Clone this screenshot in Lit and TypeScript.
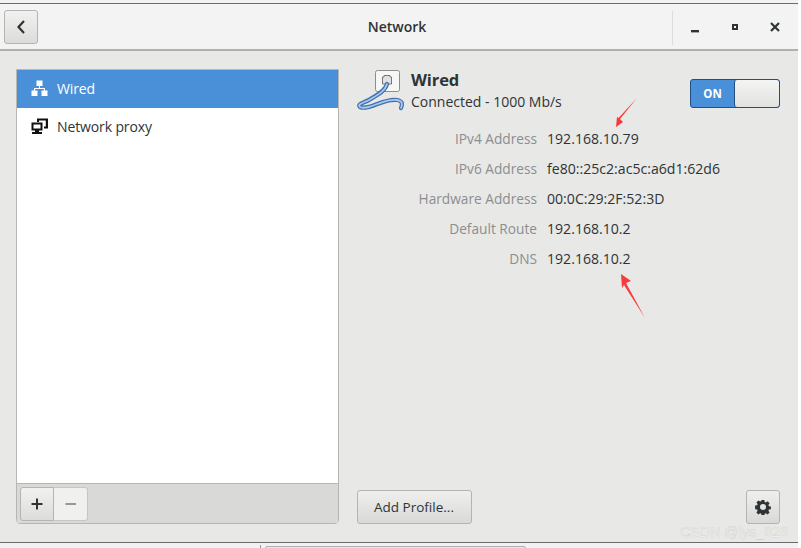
import { LitElement, html, css, svg } from "lit";
import { customElement } from "lit/decorators.js";

const rows = [
  ["IPv4 Address", "192.168.10.79"],
  ["IPv6 Address", "fe80::25c2:ac5c:a6d1:62d6"],
  ["Hardware Address", "00:0C:29:2F:52:3D"],
  ["Default Route", "192.168.10.2"],
  ["DNS", "192.168.10.2"],
];

const CABLE = "M30 18 C28 26 18 30 12 34 C6 37 0 38 3 41 C12 45 26 32 40 34 C45 35 46 37 44 42";

@customElement("app-root")
export class AppRoot extends LitElement {
  static styles = css`
    :host { display: block; width: 801px; height: 548px; overflow: hidden; background: #fff; position: relative;
      font-family: "Open Sans", "Noto Sans", sans-serif; font-size: 14px; color: #2e3436; }
    * { box-sizing: border-box; }
    .win { width: 798px; height: 543px; display: flex; flex-direction: column; background: #e8e8e7; }
    .topline { height: 4px; flex: none; background: #f2f2f2; border-bottom: 1px solid #6b6b6b; }
    .header { height: 47px; flex: none; background: #f3f3f3; border-bottom: 2px solid #b0b0ae; display: flex; align-items: center; padding: 0 0 0 4px; position: relative; }
    .back { width: 34px; height: 34px; border: 1px solid #b4b4b2; border-radius: 3px; background: linear-gradient(#f1f1f0, #dcdcda); display: flex; align-items: center; justify-content: center; margin-top: 1px; }
    .title { flex: 1; text-align: center; font-weight: 600; font-size: 14px; color: #2e3436; padding: 0 0 1px 84px; }
    .sep { width: 1px; height: 34px; background: #dcdcdc; margin-top: 2px; }
    .wc { display: flex; width: 125px; padding-left: 2px; align-items: center; margin-top: 3px; }
    .wc span { width: 40px; display: flex; justify-content: center; }
    .wc .up { margin-top: -3px; }
    .body { flex: 1; display: flex; padding: 18px 0 19px 16px; min-height: 0; }
    .left { width: 323px; flex: none; display: flex; flex-direction: column; border: 1px solid #b6b6b3; border-radius: 0 0 4px 4px; }
    .list { flex: 1; background: #fff; border-bottom: 1px solid #b6b6b3; }
    .item { height: 38px; display: flex; align-items: center; gap: 9px; padding: 0 0 2px 14px; font-size: 14px; letter-spacing: -0.12px; }
    .item.sel { background: #4a90d9; color: #fff; }
    .item svg { width: 17px; height: 17px; flex: none; }
    .toolbar { height: 39px; flex: none; background: #d9d9d7; display: flex; align-items: center; padding: 0 0 0 3px; }
    .tb { width: 34px; height: 34px; display: flex; align-items: center; justify-content: center; }
    .tb.add { border: 1px solid #b4b4b2; border-radius: 3px 0 0 3px; background: linear-gradient(#f1f1f0, #dcdcda); }
    .tb.rem { border: 1px solid #c6c6c4; border-left: 0; border-radius: 0 3px 3px 0; background: #f0f0ef; width: 34px; }
    .right { flex: 1; display: flex; flex-direction: column; padding-left: 18px; padding-right: 18px; min-width: 0; }
    .top { display: flex; height: 46px; }
    .cable { width: 54px; height: 50px; flex: none; margin-top: -3px; }
    .head-t .n { font-size: 16.5px; font-weight: 700; line-height: 22px; letter-spacing: -0.1px; color: #2e3436; }
    .head-t .s { font-size: 14px; line-height: 22px; }
    .spacer { flex: 1; }
    .sw { width: 90px; height: 29px; margin: 10px 0 0 0; border: 1px solid #1f4f85; border-radius: 3px; background: #4a90d9; display: flex; }
    .sw .on { width: 43px; color: #fff; font-size: 11.5px; font-weight: 700; display: flex; align-items: center; justify-content: center; }
    .sw .knob { flex: 1; background: linear-gradient(#f4f4f3, #e2e2e0); border-left: 1px solid #1f4f85; border-radius: 3px; }
    .rows { display: grid; grid-template-columns: 180px 1fr; grid-auto-rows: 30px; column-gap: 10px; align-items: center; margin-top: 8px; font-size: 14.1px; }
    .rows .k { text-align: right; color: #8b8e8f; font-size: 13.7px; }
    .bottom { margin-top: auto; display: flex; justify-content: space-between; align-items: flex-end; }
    .btn { height: 34px; border: 1px solid #b4b4b2; border-radius: 3px; background: linear-gradient(#efefee, #d9d9d7); display: flex; align-items: center; justify-content: center; }
    .btn.p { width: 115px; font-size: 13.5px; padding: 0 1px 1px 0; }
    .btn.g { width: 34px; }
    .foot { position: absolute; left: 0; top: 542px; width: 798px; height: 6px; border-top: 1px solid #6b6b6b; background: #f2f2f2; }
    .tab { position: absolute; left: 265px; top: 3px; width: 261px; height: 4px; border: 1px solid #b0b0b0; background: #e6e6e6; border-radius: 2px 2px 0 0; }
    .tick { position: absolute; left: 260px; top: 2px; width: 1px; height: 4px; background: #999; }
    .wm { position: absolute; left: 680px; top: 524px; font-family: "Liberation Sans", sans-serif; font-size: 14px; letter-spacing: 0.15px; white-space: pre; color: #f1f1f0; -webkit-text-stroke: 0.25px #c2c2c0; }
    .arrows { position: absolute; left: 0; top: 0; pointer-events: none; }
  `;

  render() {
    return html`
      <div class="win">
        <div class="topline"></div>
        <div class="header">
          <div class="back">
            <svg width="12" height="16" viewBox="0 0 12 16"><path d="M9 2 L3.5 8 L9 14" fill="none" stroke="#2e3436" stroke-width="2.2"/></svg>
          </div>
          <div class="title">Network</div>
          <div class="sep"></div>
          <div class="wc">
            <span><svg width="10" height="10" viewBox="0 0 10 10"><rect x="1" y="7" width="8" height="2.4" fill="#2e3436"/></svg></span>
            <span class="up"><svg width="8" height="8" viewBox="0 0 8 8"><path d="M1 1h6v6H1z M3 3v2h2V3z" fill-rule="evenodd" fill="#2e3436"/></svg></span>
            <span class="up"><svg width="10" height="10" viewBox="0 0 10 10"><path d="M1 1 L9 9 M9 1 L1 9" stroke="#2e3436" stroke-width="2.2"/></svg></span>
          </div>
        </div>
        <div class="body">
          <div class="left">
            <div class="list">
              <div class="item sel">
                <svg viewBox="0 0 17 17" fill="#fff"><rect x="5.5" y="0.5" width="6" height="5.5"/><rect x="0.5" y="10.5" width="6" height="5.5"/><rect x="10.5" y="10.5" width="6" height="5.5"/><path d="M8 6h1v2h5v3h-1V9H4v2H3V8h5z"/></svg>
                Wired
              </div>
              <div class="item">
                <svg viewBox="0 0 17 17"><path d="M6 0.5h11v10h-4V8.5h1.800V2.500H8V4H6z" fill="#111"/><path d="M0.5 4.500h11v8H8v1.500h3v2H1v-2h3v-1.500H0.500z M2.500 6.500v4h7v-4z" fill="#111" fill-rule="evenodd"/></svg>
                Network proxy
              </div>
            </div>
            <div class="toolbar">
              <div class="tb add"><svg width="12" height="12" viewBox="0 0 12 12"><path d="M0.5 6h11M6 0.5v11" stroke="#2e3436" stroke-width="2"/></svg></div>
              <div class="tb rem"><svg width="12" height="12" viewBox="0 0 12 12"><path d="M0.5 6h10.500" stroke="#94979a" stroke-width="2"/></svg></div>
            </div>
          </div>
          <div class="right">
            <div class="top">
              <svg class="cable" viewBox="0 0 54 50">
                <rect x="18.500" y="4.500" width="24" height="21" rx="2" fill="#f7f7f6" stroke="#8d8d8d"/>
                <path d="M27 9.500h6v1.500h1.500v7h-9v-7H27z" fill="#e2e2e2" stroke="#777" stroke-width="1"/>
                <path d=${CABLE} fill="none" stroke="#3f70ad" stroke-width="4.200" stroke-linecap="round"/>
                <path d=${CABLE} fill="none" stroke="#a9c8ea" stroke-width="1.800" stroke-linecap="round"/>
              </svg>
              <div class="head-t">
                <div class="n">Wired</div>
                <div class="s">Connected - 1000 Mb/s</div>
              </div>
              <div class="spacer"></div>
              <div class="sw"><div class="on">ON</div><div class="knob"></div></div>
            </div>
            <div class="rows">
              ${rows.map(([k, v]) => html`<div class="k">${k}</div><div>${v}</div>`)}
            </div>
            <div class="bottom">
              <div class="btn p">Add Profile...</div>
              <div class="btn g">
                <svg width="16" height="16" viewBox="0 0 16 16"><path fill="#2e3436" fill-rule="evenodd" d="M6.600 1h2.800l.3 2 1.200.5 1.700-1.200 2 2-1.200 1.700.5 1.200 2 .3v2.800l-2 .3-.5 1.200 1.200 1.700-2 2-1.700-1.200-1.200.5-.3 2H6.600l-.3-2-1.200-.5-1.700 1.200-2-2 1.200-1.700-.5-1.200-2-.3V6.600l2-.3.5-1.200-1.200-1.700 2-2 1.700 1.200 1.200-.5z M8 5a3 3 0 1 0 0 6 3 3 0 0 0 0-6z"/></svg>
              </div>
            </div>
          </div>
        </div>
      </div>
      <div class="foot"><div class="tick"></div><div class="tab"></div></div>
      <div class="wm">CSDN @lys_828</div>
      <svg class="arrows" width="801" height="548" viewBox="0 0 801 548">
        ${svg`<path d="M637 98 L620 119 L623 122 L616 127 L617 117 L618.500 118 Z" fill="#f93a3a"/>
        <path d="M645 318 L626 283 L631 281 L621 274 L622 288 L624 285 Z" fill="#f93a3a"/>`}
      </svg>
    `;
  }
}
